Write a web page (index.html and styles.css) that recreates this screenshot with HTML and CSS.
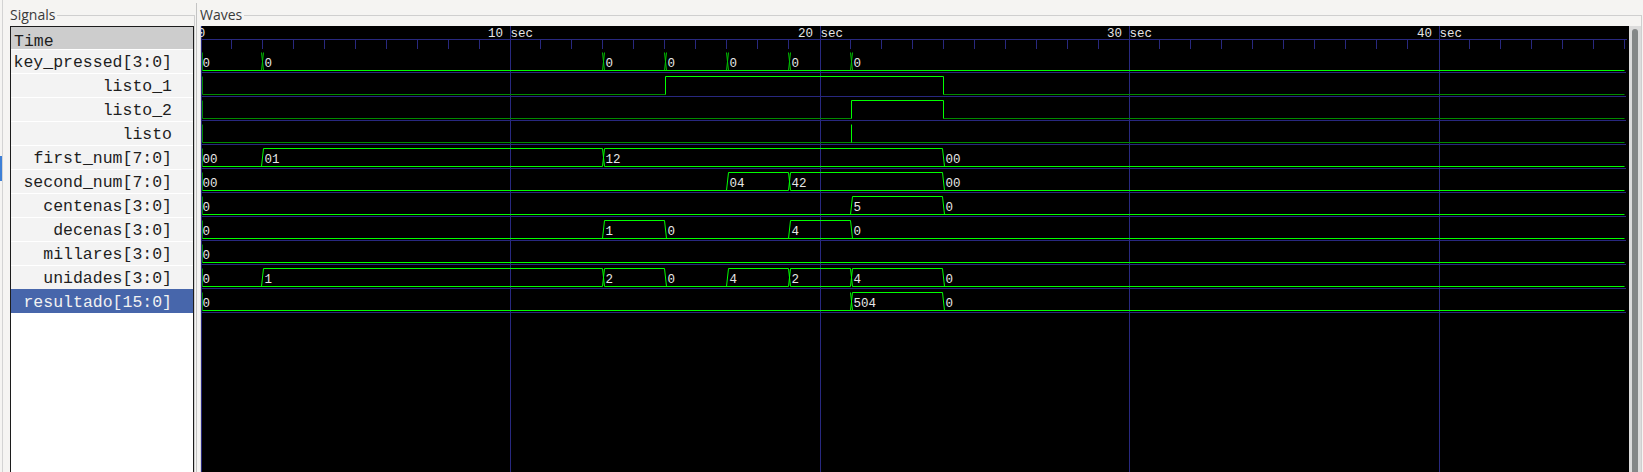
FILE: index.html
```html
<!DOCTYPE html>
<html>
<head>
<meta charset="utf-8">
<title>GTKWave</title>
<link rel="stylesheet" href="styles.css">
</head>
<body>
<div class="app">
  <div class="edge"><div class="edge-mark"></div></div>

  <section class="frame signals">
    <span class="frame-title">Signals</span>
    <div class="siglist">
      <div class="time-row">Time</div>
      <div class="sig">key_pressed[3:0]</div>
      <div class="sig">listo_1</div>
      <div class="sig">listo_2</div>
      <div class="sig">listo</div>
      <div class="sig">first_num[7:0]</div>
      <div class="sig">second_num[7:0]</div>
      <div class="sig">centenas[3:0]</div>
      <div class="sig">decenas[3:0]</div>
      <div class="sig">millares[3:0]</div>
      <div class="sig">unidades[3:0]</div>
      <div class="sig sel">resultado[15:0]</div>
    </div>
  </section>

  <div class="divider"></div>

  <section class="frame waves">
    <span class="frame-title">Waves</span>
    <div class="wave-body">
      <svg class="wave-canvas" width="1428" height="446" viewBox="0 0 1428 446">
        <g class="grid" fill="none" stroke-width="1">
          <path d="M0.5 0V446M309.5 0V446M619.5 0V446M928.5 0V446M1238.5 0V446"/>
          <path d="M0 13.5H1426"/>
          <path d="M30.5 14V23M61.5 14V23M92.5 14V23M123.5 14V23M154.5 14V23M185.5 14V23M216.5 14V23M247.5 14V23M278.5 14V23M339.5 14V23M370.5 14V23M401.5 14V23M432.5 14V23M463.5 14V23M494.5 14V23M525.5 14V23M556.5 14V23M587.5 14V23M649.5 14V23M680.5 14V23M711.5 14V23M742.5 14V23M773.5 14V23M804.5 14V23M835.5 14V23M866.5 14V23M897.5 14V23M958.5 14V23M989.5 14V23M1020.5 14V23M1051.5 14V23M1082.5 14V23M1113.5 14V23M1144.5 14V23M1175.5 14V23M1206.5 14V23M1268.5 14V23M1299.5 14V23M1330.5 14V23M1361.5 14V23M1392.5 14V23M1423.5 14V23"/>
          <path d="M0 46.5H1425M0 70.5H1425M0 94.5H1425M0 118.5H1425M0 142.5H1425M0 166.5H1425M0 190.5H1425M0 214.5H1425M0 238.5H1425M0 262.5H1425M0 286.5H1425"/>
        </g>

        <g class="tlabels">
          <text x="0.5" y="10.7" text-anchor="middle">0</text>
          <text x="309.5" y="10.7" text-anchor="middle">10 sec</text>
          <text x="619.5" y="10.7" text-anchor="middle">20 sec</text>
          <text x="928.5" y="10.7" text-anchor="middle">30 sec</text>
          <text x="1238.5" y="10.7" text-anchor="middle">40 sec</text>
        </g>

        <g class="low" fill="none" stroke-width="1">
          <path d="M1.5 26.5V44.5M1.5 122.5V140.5M1.5 146.5V164.5M1.5 170.5V188.5M1.5 194.5V212.5M1.5 218.5V236.5M1.5 242.5V260.5M1.5 266.5V284.5"/>
          <path d="M1.5 50.5V68.5M1.5 68.5H464.5M742.5 68.5H1423.5"/>
          <path d="M1.5 74.5V92.5M1.5 92.5H650.5M742.5 92.5H1423.5"/>
          <path d="M1.5 98.5V116.5M1.5 116.5H1423.5"/>
        </g>

        <g class="trans" fill="none" stroke-width="1">
          <path d="M60.5 44.5L62.5 26.5M60.5 26.5L62.5 44.5M401.5 44.5L403.5 26.5M401.5 26.5L403.5 44.5M463.5 44.5L465.5 26.5M463.5 26.5L465.5 44.5M525.5 44.5L527.5 26.5M525.5 26.5L527.5 44.5M587.5 44.5L589.5 26.5M587.5 26.5L589.5 44.5M649.5 44.5L651.5 26.5M649.5 26.5L651.5 44.5"/>
        </g>

        <g class="hi" fill="none" stroke-width="1">
          <path d="M1.5 44.5H1423.5"/>
          <path d="M464.5 68.5V50.5H742.5V68.5"/>
          <path d="M650.5 92.5V74.5H742.5V92.5"/>
          <path d="M650.5 98.5V116.5"/>
          <path d="M1.5 140.5H401.5M403.5 140.5H1423.5M62.5 122.5H401.5M403.5 122.5H741.5M60.5 140.5L62.5 122.5M401.5 122.5L403.5 140.5M401.5 140.5L403.5 122.5M741.5 122.5L743.5 140.5"/>
          <path d="M1.5 164.5H587.5M589.5 164.5H1423.5M527.5 146.5H587.5M589.5 146.5H741.5M525.5 164.5L527.5 146.5M587.5 146.5L589.5 164.5M587.5 164.5L589.5 146.5M741.5 146.5L743.5 164.5"/>
          <path d="M1.5 188.5H1423.5M651.5 170.5H741.5M649.5 188.5L651.5 170.5M741.5 170.5L743.5 188.5"/>
          <path d="M1.5 212.5H1423.5M403.5 194.5H463.5M589.5 194.5H649.5M401.5 212.5L403.5 194.5M463.5 194.5L465.5 212.5M587.5 212.5L589.5 194.5M649.5 194.5L651.5 212.5"/>
          <path d="M1.5 236.5H1423.5"/>
          <path d="M1.5 260.5H401.5M403.5 260.5H587.5M589.5 260.5H649.5M651.5 260.5H1423.5M62.5 242.5H401.5M403.5 242.5H463.5M527.5 242.5H587.5M589.5 242.5H649.5M651.5 242.5H741.5M60.5 260.5L62.5 242.5M401.5 242.5L403.5 260.5M401.5 260.5L403.5 242.5M463.5 242.5L465.5 260.5M525.5 260.5L527.5 242.5M587.5 242.5L589.5 260.5M587.5 260.5L589.5 242.5M649.5 242.5L651.5 260.5M649.5 260.5L651.5 242.5M741.5 242.5L743.5 260.5"/>
          <path d="M1.5 284.5H1423.5M651.5 266.5H741.5M649.5 284.5L651.5 266.5M649.5 266.5L651.5 284.5M741.5 266.5L743.5 284.5"/>
        </g>

        <g class="vlabels">
          <text x="1.5" y="40.7">0</text>
          <text x="63.5" y="40.7">0</text>
          <text x="404.5" y="40.7">0</text>
          <text x="466.5" y="40.7">0</text>
          <text x="528.5" y="40.7">0</text>
          <text x="590.5" y="40.7">0</text>
          <text x="652.5" y="40.7">0</text>

          <text x="1.5" y="136.7">00</text>
          <text x="63.5" y="136.7">01</text>
          <text x="404.5" y="136.7">12</text>
          <text x="744.5" y="136.7">00</text>

          <text x="1.5" y="160.7">00</text>
          <text x="528.5" y="160.7">04</text>
          <text x="590.5" y="160.7">42</text>
          <text x="744.5" y="160.7">00</text>

          <text x="1.5" y="184.7">0</text>
          <text x="652.5" y="184.7">5</text>
          <text x="744.5" y="184.7">0</text>

          <text x="1.5" y="208.7">0</text>
          <text x="404.5" y="208.7">1</text>
          <text x="466.5" y="208.7">0</text>
          <text x="590.5" y="208.7">4</text>
          <text x="652.5" y="208.7">0</text>

          <text x="1.5" y="232.7">0</text>

          <text x="1.5" y="256.7">0</text>
          <text x="63.5" y="256.7">1</text>
          <text x="404.5" y="256.7">2</text>
          <text x="466.5" y="256.7">0</text>
          <text x="528.5" y="256.7">4</text>
          <text x="590.5" y="256.7">2</text>
          <text x="652.5" y="256.7">4</text>
          <text x="744.5" y="256.7">0</text>

          <text x="1.5" y="280.7">0</text>
          <text x="652.5" y="280.7">504</text>
          <text x="744.5" y="280.7">0</text>
        </g>
      </svg>
      <div class="vscroll"><div class="thumb"></div></div>
    </div>
  </section>
</div>
</body>
</html>
```

FILE: styles.css
```css
html, body {
  margin: 0;
  padding: 0;
}

body {
  width: 1643px;
  height: 472px;
  overflow: hidden;
  background: #f5f4f2;
  font-family: "Open Sans", "Noto Sans", "Liberation Sans", sans-serif;
}

.app {
  display: flex;
  height: 472px;
}

/* left window edge */
.edge {
  flex: none;
  width: 9px;
  display: flex;
  flex-direction: column;
  background: linear-gradient(to right, transparent 2px, #d3d3d3 2px, #d3d3d3 3px, transparent 3px);
}

.edge-mark {
  margin-top: 156px;
  width: 2px;
  height: 25px;
  background: #3d7fd6;
}

/* GTK-style frames */
.frame {
  box-sizing: border-box;
  margin-top: 15px;
  border-top: 1px solid #cfcfcf;
  border-right: 1px solid #cfcfcf;
  display: flex;
  flex-direction: column;
  min-width: 0;
}

.frame-title {
  align-self: flex-start;
  margin-top: -10px;
  height: 18px;
  line-height: 18px;
  font-size: 14px;
  color: #3a3a3a;
  background: #f5f4f2;
  padding: 0 2px 0 1px;
}

.signals {
  flex: none;
  width: 186px;
}

.siglist {
  box-sizing: border-box;
  width: 184px;
  margin: 2px 0 0 1px;
  flex: 1;
  border: 1px solid #1c1c1c;
  border-bottom: none;
  background: #ffffff;
  font-family: "Liberation Mono", "DejaVu Sans Mono", monospace;
  font-size: 16.5px;
  color: #1e1e1e;
  white-space: nowrap;
}

.time-row {
  height: 22px;
  line-height: 30px;
  padding-left: 3px;
  background: #cdcdcd;
}

.sig {
  height: 23px;
  line-height: 25px;
  border-top: 1px solid #ffffff;
  background: #f3f3f3;
  text-align: right;
  padding-right: 21px;
}

.sig.sel {
  background: #4766ab;
  border-top-color: #4766ab;
  color: #f2f2f2;
}

.divider {
  flex: none;
  width: 5px;
  margin-top: 3px;
  background: linear-gradient(to right, transparent 1px, #c4c4c4 1px, #c4c4c4 2px, transparent 2px);
}

.waves {
  flex: none;
  width: 1442px;
}

.waves .frame-title {
  padding-left: 0;
}

.wave-body {
  flex: 1;
  display: flex;
  margin-top: 2px;
  border-left: 1px solid #d8d8d8;
  min-height: 0;
}

.wave-canvas {
  display: block;
  flex: none;
  background: #000000;
}

.grid path {
  stroke: #28287f;
}

.low path {
  stroke: #008a00;
}

.trans path {
  stroke: #00c000;
}

.hi path {
  stroke: #00ff00;
}

.tlabels text,
.vlabels text {
  font-family: "Liberation Mono", "DejaVu Sans Mono", monospace;
  font-size: 12.5px;
  fill: #e6e6e6;
}

.vscroll {
  flex: none;
  width: 12px;
  background: #dcdcdc;
  padding-top: 3px;
  box-sizing: border-box;
}

.thumb {
  width: 6px;
  height: 100%;
  margin-left: 3px;
  background: #848787;
  border-radius: 3px 3px 0 0;
}
```
